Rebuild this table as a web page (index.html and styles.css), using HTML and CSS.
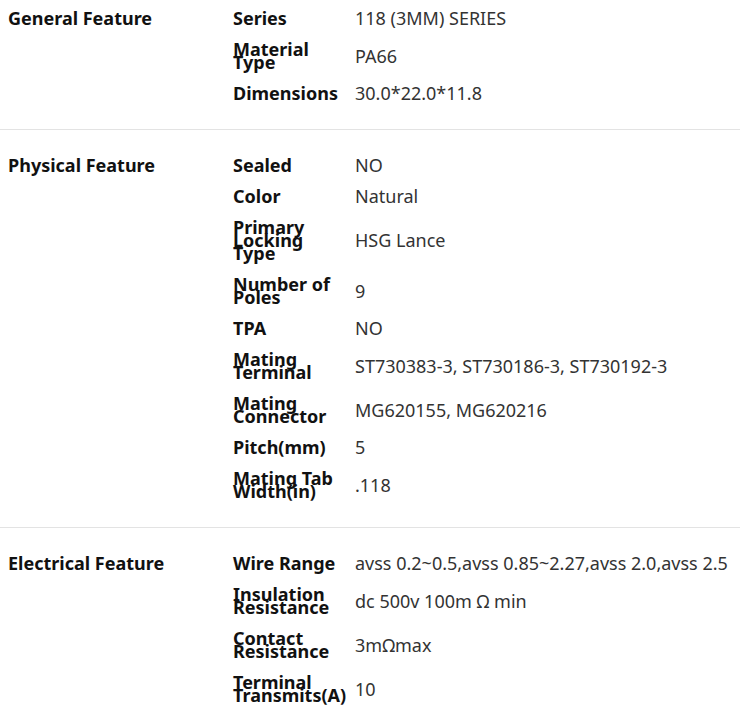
FILE: index.html
```html
<!DOCTYPE html>
<html lang="en">
<head>
    <meta charset="UTF-8">
    <meta name="viewport" content="width=device-width, initial-scale=1.0">
    <title>118 (3MM) Series - Specification</title>
    <link rel="stylesheet" href="styles.css">
</head>
<body>
    <div class="spec">
        <section class="spec-group">
            <h3 class="group-title">General Feature</h3>
            <div class="group-rows">
                <div class="row"><div class="label">Series</div><div class="value">118 (3MM) SERIES</div></div>
                <div class="row"><div class="label">Material Type</div><div class="value">PA66</div></div>
                <div class="row"><div class="label">Dimensions</div><div class="value">30.0*22.0*11.8</div></div>
            </div>
        </section>

        <section class="spec-group">
            <h3 class="group-title">Physical Feature</h3>
            <div class="group-rows">
                <div class="row"><div class="label">Sealed</div><div class="value">NO</div></div>
                <div class="row"><div class="label">Color</div><div class="value">Natural</div></div>
                <div class="row"><div class="label">Primary Locking Type</div><div class="value">HSG Lance</div></div>
                <div class="row"><div class="label">Number of Poles</div><div class="value">9</div></div>
                <div class="row"><div class="label">TPA</div><div class="value">NO</div></div>
                <div class="row"><div class="label">Mating Terminal</div><div class="value">ST730383-3, ST730186-3, ST730192-3</div></div>
                <div class="row"><div class="label">Mating Connector</div><div class="value">MG620155, MG620216</div></div>
                <div class="row"><div class="label">Pitch(mm)</div><div class="value">5</div></div>
                <div class="row"><div class="label">Mating Tab Width(in)</div><div class="value">.118</div></div>
            </div>
        </section>

        <section class="spec-group">
            <h3 class="group-title">Electrical Feature</h3>
            <div class="group-rows">
                <div class="row"><div class="label">Wire Range</div><div class="value">avss 0.2~0.5,avss 0.85~2.27,avss 2.0,avss 2.5</div></div>
                <div class="row"><div class="label">Insulation Resistance</div><div class="value">dc 500v 100m &Omega; min</div></div>
                <div class="row"><div class="label">Contact Resistance</div><div class="value">3m&Omega;max</div></div>
                <div class="row"><div class="label">Terminal Transmits(A)</div><div class="value">10</div></div>
            </div>
        </section>
    </div>
</body>
</html>
```

FILE: styles.css
```css
* {
    margin: 0;
    padding: 0;
    box-sizing: border-box;
}

body {
    background-color: #ffffff;
    font-family: 'Noto Sans', 'Noto Sans CJK KR', sans-serif;
    color: #111111;
}

.spec-group {
    display: flex;
    padding: 20px 0;
    border-bottom: 1px solid #e3e3e3;
}

.spec-group:first-child {
    padding-top: 3px;
}

.spec-group:last-child {
    border-bottom: none;
}

.group-title {
    width: 233px;
    flex-shrink: 0;
    padding: 9px 0 0 8px;
    font-size: 18px;
    font-weight: 700;
    line-height: 13px;
    color: #111111;
}

.group-rows {
    flex: 1;
}

.row {
    display: flex;
    align-items: center;
    padding: 9px 0;
}

.label {
    width: 122px;
    flex-shrink: 0;
    padding-right: 7px;
    font-size: 18px;
    font-weight: 700;
    line-height: 13px;
    color: #111111;
}

.value {
    font-size: 18px;
    line-height: 13px;
    color: #333333;
    white-space: nowrap;
}
```
